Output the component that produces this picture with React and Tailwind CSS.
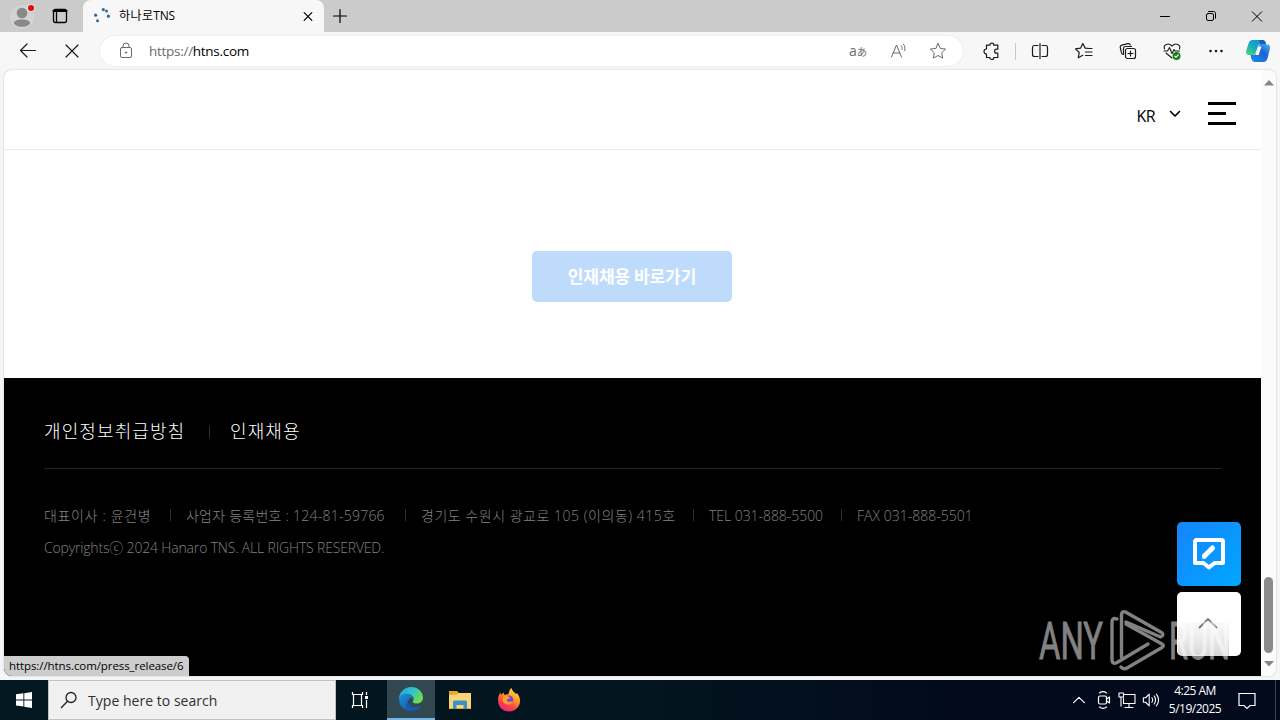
import React from "react";

const footerInfo = [
  { text: "대표이사 : 윤건병", className: "w-[108px] tracking-[0.66px]" },
  { text: "사업자 등록번호 : 124-81-59766", className: "w-[200px] tracking-[0.24px]" },
  { text: "경기도 수원시 광교로 105 (이의동) 415호", className: "w-[254px] tracking-[0.52px]" },
  { text: "TEL 031-888-5500", className: "w-[114px] tracking-[-0.05px]" },
  { text: "FAX 031-888-5501", className: "w-[117px] tracking-[0.02px]" },
];

// Line icon, drawn on a 20px grid
function Icon({ children, size = 20, width = 1, className = "" }) {
  return (
    <svg
      width={size}
      height={size}
      viewBox="0 0 20 20"
      fill="none"
      stroke="currentColor"
      strokeWidth={width}
      strokeLinecap="round"
      strokeLinejoin="round"
      className={`shrink-0 ${className}`}
    >
      {children}
    </svg>
  );
}

function Cell({ children, className = "w-11" }) {
  return (
    <div className={`flex h-full shrink-0 items-center justify-center ${className}`}>
      {children}
    </div>
  );
}

function TabStrip() {
  return (
    <div className="flex h-8 shrink-0 bg-[#cbcbcb] text-black">
      <Cell className="w-11">
        <svg width="28" height="28" viewBox="0 0 28 28">
          <circle cx="14" cy="15" r="12" fill="#d3d3d3" />
          <circle cx="14" cy="11" r="5.3" fill="#898989" />
          <path d="M6 21.500c0-3 3-4 8-4s8 1 8 4c-1.500 2.500-4.500 3.300-8 3.300s-6.500-.8-8-3.300z" fill="#898989" />
          <circle cx="23" cy="6" r="4" fill="#e0e0e0" />
          <circle cx="23" cy="6" r="3" fill="#e00b0b" />
        </svg>
      </Cell>
      <Cell className="w-[32px]">
        <Icon width={1.3}>
          <rect x="3.500" y="3.500" width="13" height="13" rx="2" />
          <path d="M3.500 5h13" strokeWidth="2.200" />
          <path d="M6.500 6v10" />
        </Icon>
      </Cell>
      <div className="ml-[7px] flex w-[241px] items-center rounded-t-lg bg-[#f7f7f7] pl-2.5">
        <svg width="18" height="18" viewBox="0 0 18 18" fill="#2f6a9e">
          <circle cx="2.600" cy="8.200" r="1.600" />
          <circle cx="4.500" cy="13.800" r="1.500" />
          <circle cx="10.300" cy="2.600" r="1.600" />
          <circle cx="13.500" cy="4" r="1.500" />
          <circle cx="15.400" cy="9.200" r="1.600" />
        </svg>
        <span className="ml-[8px] flex-1 whitespace-nowrap font-['Open_Sans','Noto_Sans_CJK_KR',sans-serif] text-[12px] tracking-[0.4px]">
          하나로<span className="tracking-[-0.2px]">TNS</span>
        </span>
        <Icon width={1.2} className="mr-[6px]">
          <path d="M6.200 6.700l7.600 7.600M13.800 6.700l-7.600 7.600" />
        </Icon>
      </div>
      <Cell className="w-8">
        <Icon width={1.2}>
          <path d="M10 3.500v13M3.500 10h13" />
        </Icon>
      </Cell>
      <div className="flex-1" />
      <Cell className="w-[46px]">
        <Icon>
          <path d="M5.500 10.500h9" />
        </Icon>
      </Cell>
      <Cell className="w-[46px]">
        <Icon>
          <rect x="5.500" y="7.500" width="7" height="7" rx="1.500" />
          <path d="M7.500 5.500h5.200c1.200 0 1.800.6 1.800 1.800v5" />
        </Icon>
      </Cell>
      <Cell className="w-[46px]">
        <Icon>
          <path d="M5.300 5.800l9.400 9.400M14.700 5.800l-9.400 9.400" />
        </Icon>
      </Cell>
    </div>
  );
}

function Toolbar() {
  return (
    <div className="flex h-[38px] shrink-0 items-center bg-[#f7f7f7] pl-1.5 text-[#1b1b1b]">
      <Cell>
        <Icon width={1.2}>
          <path d="M17.500 9.500H2.500M9 3L2.500 9.500 9 16" />
        </Icon>
      </Cell>
      <Cell>
        <Icon width={1.2}>
          <path d="M4 4l12 12M16 4L4 16" />
        </Icon>
      </Cell>
      <div className="ml-1.5 flex h-[30px] w-[863px] items-center rounded-full bg-white pr-[5px] pl-4 text-[#6b6b6b] shadow-[0_0_2px_#dcdcdc]">
        <Icon>
          <rect x="4.500" y="6.500" width="11" height="10" rx="1.500" />
          <path d="M7 6.500V5a3 3 0 0 1 6 0v1.500" />
          <circle cx="10" cy="11.500" r=".7" fill="currentColor" />
        </Icon>
        <span className="ml-[13px] flex-1 font-['Open_Sans',sans-serif] text-[13.500px] tracking-[-0.28px]">
          https://<span className="text-black">htns.com</span>
        </span>
        <Cell className="w-10">
          <span className="flex items-baseline whitespace-nowrap font-['Open_Sans','Noto_Sans_CJK_JP',sans-serif] text-[14px] leading-none">
            a<span className="text-[10px]">あ</span>
          </span>
        </Cell>
        <Cell className="w-10">
          <Icon className="ml-px">
            <path d="M2.500 16L7.500 4l5 12M4.300 12h6.400M12 4.500c1.200 1 1.500 2.500 1 4M14.200 3c1.800 1.700 2.200 4 1.500 6.500" />
          </Icon>
        </Cell>
        <Cell className="w-10">
          <Icon>
            <path d="M10 2.500l2.300 4.900 5.300.7-3.900 3.700 1 5.300-4.700-2.600-4.700 2.600 1-5.300-3.900-3.700 5.300-.7z" />
          </Icon>
        </Cell>
      </div>
      <Cell className="ml-1.5 w-11">
        <Icon width={1.2} className="ml-[2px]">
          <path d="M4.500 4.200h3.300a2 2 0 0 1 4 0h4v4h-1.200a2 2 0 0 0 0 4h1.200v4.300h-4a2 2 0 0 1-4 0H4.500V13a2.400 2.400 0 0 1 0-5z" />
        </Icon>
      </Cell>
      <div className="ml-[2px] mr-[2px] h-[17px] w-px bg-[#c9c9c9]" />
      <Cell>
        <Icon width={1.2} className="-ml-px">
          <path d="M8 4.500H4.500a2 2 0 0 0-2 2v7a2 2 0 0 0 2 2H8M12 4.500h3.500a2 2 0 0 1 2 2v7a2 2 0 0 1-2 2H12M10 2.500v15" />
        </Icon>
      </Cell>
      <Cell>
        <Icon width={1.2}>
          <path d="M15.500 7.500l-4.300-.4L8.800 2.500 6.500 7.200l-5 .7L5.200 11.500l-.9 5.200 4.500-2.400M12 7.500h6M11.500 11H18M11.500 14.500H18" />
        </Icon>
      </Cell>
      <Cell>
        <Icon width={1.2}>
          <path d="M5.500 13.500c-1.200 0-1.700-.6-2-1.600L2.300 6.500c-.3-1.200.3-2 1.500-2.300l6.200-1.500c1.300-.3 2 .2 2.300 1.300M5.500 13V7.500a2 2 0 0 1 2-2h6" />
          <rect x="7.500" y="7.500" width="10" height="10" rx="2" />
          <path d="M12.500 10v5M10 12.500h5" />
        </Icon>
      </Cell>
      <Cell>
        <Icon width={1.1}>
          <path d="M2.500 8C1 4 6 1 10 5c4-4 9-1 7.500 3M4 12l6 5M2 10h3.500l2-3.500 2.500 6 2-4 1 1.500h4.500" />
          <circle cx="14.500" cy="15" r="4" fill="#16801b" stroke="none" />
          <path d="M12.700 15.200l1.300 1.200 2.300-2.500" stroke="white" />
        </Icon>
      </Cell>
      <Cell>
        <Icon>
          <g fill="currentColor" stroke="none">
            <circle cx="4.500" cy="10" r="1.300" />
            <circle cx="10" cy="10" r="1.300" />
            <circle cx="15.500" cy="10" r="1.300" />
          </g>
        </Icon>
      </Cell>
      <Cell className="w-10">
        <svg width="26" height="26" viewBox="0 0 26 26">
          <defs>
            <linearGradient id="copA" x1="0" y1="1" x2="1" y2="0">
              <stop offset="0" stopColor="#55d86b" />
              <stop offset=".5" stopColor="#12a8c7" />
              <stop offset="1" stopColor="#1683db" />
            </linearGradient>
            <linearGradient id="copB" x1="0" y1="1" x2="1" y2="0">
              <stop offset="0" stopColor="#1590f0" />
              <stop offset=".6" stopColor="#1f63d2" />
              <stop offset="1" stopColor="#45b9f4" />
            </linearGradient>
          </defs>
          <path d="M8 2h9c3 0 3.500 2 4.200 4.500h-5.500c-2 0-2.600 1-3.200 3l-1.300 4c-.8 2.500-2 3.500-4 3.500H4C1 17 .6 14.500 1.400 12L3.500 5.500C4.200 3 5.600 2 8 2z" fill="url(#copA)" />
          <path d="M14 2h3c3 0 3.500 2 4.200 4.500h-5.500z" fill="#1760b8" />
          <path d="M18.500 24h-8c-3 0-3.800-1.800-4.500-4.500L5.500 17H8c2 0 3.200-1 4-3.500l1.500-4.500c.5-1.700 1.500-2.500 3-2.500h5.700c3 0 3.400 2.500 2.600 5l-2.100 8.300c-.7 2.700-2 4.200-4.200 4.200z" fill="url(#copB)" />
          <path d="M13.500 8.500h3L13.500 17H10.600z" fill="white" />
        </svg>
      </Cell>
    </div>
  );
}

function Divider() {
  return <span className="h-3 w-px shrink-0 bg-[#2d2d2d]" />;
}

function SiteFooter() {
  return (
    <footer className="h-[298px] bg-black px-10 font-['Open_Sans','Noto_Sans_CJK_KR',sans-serif] font-light">
      <div className="flex h-[91px] items-center border-b border-[#262626] pt-[17px] text-white">
        <a className="w-[165px] whitespace-nowrap text-[18px] tracking-[1.1px]">개인정보취급방침</a>
        <Divider />
        <a className="ml-[20px] whitespace-nowrap text-[18px] tracking-[1.1px]">인재채용</a>
      </div>
      <div className="mt-[30px] flex h-8 items-center text-[14px] text-[#828282]">
        {footerInfo.map((item, i) => (
          <React.Fragment key={item.text}>
            {i > 0 && (
              <span className={`mr-[15px] flex ${i === 2 ? "ml-[19px]" : "ml-[18px]"}`}>
                <Divider />
              </span>
            )}
            <span className={`shrink-0 whitespace-nowrap ${item.className}`}>{item.text}</span>
          </React.Fragment>
        ))}
      </div>
      <p className="flex h-8 items-center text-[14px] tracking-[-0.17px] text-[#828282]">
        Copyrightsⓒ 2024 Hanaro TNS. ALL RIGHTS RESERVED.
      </p>
    </footer>
  );
}

function Watermark() {
  return (
    <svg width="200" height="66" viewBox="0 0 200 66" className="overflow-visible">
      <defs>
        <linearGradient id="runShade" x1="0" y1="0" x2="0" y2="1">
          <stop offset="0" stopColor="#000" stopOpacity=".02" />
          <stop offset=".5" stopColor="#000" stopOpacity=".08" />
          <stop offset="1" stopColor="#000" stopOpacity=".16" />
        </linearGradient>
      </defs>
      <path d="M141 14h51v34h-51z" fill="url(#runShade)" />
      <g fill="#828282" stroke="#828282" strokeWidth=".9" fontFamily="Roboto, sans-serif" fontSize="52">
        <text x="2" y="51" textLength="64" lengthAdjust="spacingAndGlyphs">ANY</text>
      </g>
      <g fill="white" stroke="white" strokeWidth=".9" opacity=".5" fontFamily="Roboto, sans-serif" fontSize="52">
        <text x="132" y="51" textLength="61" lengthAdjust="spacingAndGlyphs">RUN</text>
      </g>
      <g fill="none" stroke="#828282" strokeWidth="3.400" strokeLinejoin="round" strokeLinecap="round">
        <path d="M84.500 49V7c0-3 2-4 4-3l36 20.500c2 1.300 2 3.500-1 4.500L89 14" />
        <path d="M80 11c-4-1.500-5 .5-5 3v38c0 3 2 4 5 2.500L111 36" />
        <path d="M89 16l36 20c1.800 1 1.800 2 0 3.500L90 60c-2.500 1.500-4 1-6-1" />
        <path d="M84.500 49L120 32.500" strokeWidth="0" />
      </g>
    </svg>
  );
}

function Page() {
  return (
    <div className="relative mx-1 flex h-[606px] shrink-0 overflow-hidden rounded-lg bg-white shadow-[0_0_2px_#b9b9b9]">
      <main className="flex w-[1257px] shrink-0 flex-col">
        <header className="flex h-20 shrink-0 items-center justify-end border-b border-[#ebebeb] pr-[25px] text-black">
          <span className="mt-[12px] font-['Open_Sans',sans-serif] text-[16px] tracking-[-0.6px]">KR</span>
          <Icon size={20} width={1.700} className="mt-[9px] ml-[10px]">
            <path d="M5.500 7.500L10 12l4.500-4.500" />
          </Icon>
          <div className="mt-[7px] ml-[23px] flex w-7 flex-col gap-[7px]">
            <span className="h-[3px] bg-black" />
            <span className="h-[3px] w-[18px] bg-black" />
            <span className="h-[3px] bg-black" />
          </div>
        </header>
        <section className="flex flex-1 items-start justify-center pt-[101px] pr-px">
          <button className="h-[51px] w-[200px] rounded-[5px] bg-[#bedbfb] pb-[2px] font-['Noto_Sans_CJK_KR',sans-serif] text-[17px] font-bold tracking-[-0.05px] whitespace-nowrap text-white">
            인재채용 바로가기
          </button>
        </section>
        <SiteFooter />
      </main>

      <div className="flex w-[15px] flex-col items-center bg-[#fbfbfb]">
        <svg width="10" height="6" viewBox="0 0 10 6" className="mt-[10px]">
          <path d="M5 0l5 5.500H0z" fill="#858585" />
        </svg>
        <div className="mt-auto h-[76px] w-[9px] rounded-full bg-[#8b8b8b]" />
        <svg width="10" height="6" viewBox="0 0 10 6" className="mt-[8px] mb-[9px]">
          <path d="M5 5.500L10 0H0z" fill="#858585" />
        </svg>
      </div>

      {/* Floating buttons */}
      <div className="absolute top-[452px] right-[35px] flex flex-col gap-1.5">
        <div className="flex size-16 items-center justify-center rounded-[5px] bg-linear-to-br from-[#1683ff] to-[#00a7ff]">
          <svg width="34" height="34" viewBox="0 0 34 34" fill="none" stroke="white" strokeWidth="4">
            <path d="M3 4.500c0-.8.700-1.500 1.500-1.500h25c.8 0 1.500.7 1.500 1.500V26h-8.500L17 30.500 11.500 26H3z" strokeLinejoin="round" />
            <path d="M12.500 19L20.500 11" strokeWidth="5" strokeLinecap="round" />
            <path d="M10 21.500v-4.500l4.500 4.500z" fill="white" stroke="none" />
          </svg>
        </div>
        <div className="flex size-16 items-center justify-center rounded-[5px] bg-white pr-[2px] pb-[2px] text-[#777]">
          <svg width="22" height="14" viewBox="0 0 22 14" fill="none" stroke="currentColor" strokeWidth="1.800">
            <path d="M2 12l9-9 9 9" />
          </svg>
        </div>
      </div>

      <div className="absolute top-[538px] left-[1033px]">
        <Watermark />
      </div>

      {/* Link status */}
      <div className="absolute bottom-0 left-0 flex h-5 w-[185px] items-center rounded-tr-[4px] bg-[#cdcdcd] pl-[5px] font-['Open_Sans',sans-serif] text-[11.500px] tracking-[-0.08px] whitespace-nowrap text-black">
        https://htns.com/press_release/6
      </div>
    </div>
  );
}

function Taskbar() {
  return (
    <div className="flex h-10 shrink-0 bg-linear-to-r from-[#02171f] via-[#03151e] via-50% to-[#020a1c] to-75% font-['Open_Sans',sans-serif] text-white">
      <Cell className="w-12">
        <svg width="16" height="16" viewBox="0 0 16 16" fill="white">
          <path d="M0 2.300l7.400-1v6.200H0zM8.300 1.200L16 0v7.500H8.300zM0 8.400h7.400v6.200l-7.400-1zM8.300 8.400H16V16l-7.700-1.200z" />
        </svg>
      </Cell>
      <div className="flex w-72 items-center border border-[#c2c2c2] bg-[#f1f1f1] pl-[11px] text-[#303030]">
        <svg width="18" height="18" viewBox="0 0 18 18" fill="none" stroke="#222" strokeWidth="1.300">
          <circle cx="11" cy="6.500" r="5" />
          <path d="M7.500 10.300L1 17" />
        </svg>
        <span className="mt-px ml-[10px] text-[14px] tracking-[0.03px]">Type here to search</span>
      </div>
      <Cell className="w-12">
        <svg width="18" height="18" viewBox="0 0 18 18" fill="none" stroke="white" strokeWidth="1.200">
          <path d="M1.500 1v2.500h10V1M1.500 17v-2.500h10V17M15.500 1v3M15.500 9v8" />
          <path d="M2.500 3.500v11M10.500 3.500v11" />
          <path d="M14 6.500h3" strokeWidth="3" />
        </svg>
      </Cell>
      <div className="ml-[3px] flex w-12 items-center justify-center border-b-2 border-[#76b5e8] bg-[#324850]">
        <svg width="24" height="24" viewBox="0 0 24 24">
          <defs>
            <linearGradient id="edgeTop" x1="0" y1="0" x2="1" y2=".6">
              <stop offset="0" stopColor="#2498db" />
              <stop offset=".5" stopColor="#2fc3cf" />
              <stop offset="1" stopColor="#6edc4b" />
            </linearGradient>
            <linearGradient id="edgeLow" x1="0" y1="0" x2="1" y2="1">
              <stop offset="0" stopColor="#1993dd" />
              <stop offset="1" stopColor="#0e4c9c" />
            </linearGradient>
          </defs>
          <path d="M0 12C0 5 5.500 0 12 0c7 0 12 5 12 10.500 0 4-3 6-6.500 6-3 0-4.500-1-3.500-2.500 1.700-2.500-.5-6.500-5.500-6.500C4 7.500 0 10 0 12z" fill="url(#edgeTop)" />
          <path d="M0 12c.3-3.300 4-5.500 8-5.500 4.500 0 6.600 3 6.500 5.500-2-2-5.500-1-5.500 3 0 4.500 6 7 13 4-2 3-5.500 5-10 5C5 24 0 18.500 0 12z" fill="url(#edgeLow)" />
          <path d="M9 13c-2 5 3 9.500 13 6-2 3.500-6.500 5.300-10.500 5-4-1.500-6.500-7-2.500-11z" fill="#1459b3" />
        </svg>
      </div>
      <Cell className="w-[50px]">
        <svg width="22" height="20" viewBox="0 0 22 20">
          <path d="M0 1h8l2 2h12v16H0z" fill="#e9a927" />
          <path d="M0 5l8-.500L10 3h12v15H0z" fill="#f9d573" />
          <path d="M4 19v-7c0-1 .5-1.500 1.500-1.500h11c1 0 1.500.5 1.500 1.500v7h-3.500v-4h-7v4z" fill="#3b91ce" />
        </svg>
      </Cell>
      <Cell className="w-12">
        <svg width="24" height="24" viewBox="0 0 24 24">
          <defs>
            <linearGradient id="foxBody" x1=".8" y1="0" x2=".3" y2="1">
              <stop offset="0" stopColor="#ffe14c" />
              <stop offset=".4" stopColor="#ff9b25" />
              <stop offset=".75" stopColor="#fb3c4d" />
              <stop offset="1" stopColor="#e52680" />
            </linearGradient>
          </defs>
          <path d="M1 12c0-3 1-5.500 2.500-7.500L4 7l2.500-2.500L7.500 7l4-1c.5-3 1.500-5 3-6 .5 3 3 4 4.500 6l1-1c2 2.500 3 5 3 8 0 6-5 10.500-11 10.500S1 19 1 12z" fill="url(#foxBody)" />
          <circle cx="11.800" cy="12" r="4.500" fill="#7842d5" />
          <path d="M6.500 8c3-.5 5.500.2 7 2l-3 1.200c-1 .5-1 2 1 2.500 2 .5 3-.5 4.500-.5-1 3-5 4.500-8 2.500-2.500-1.700-3-4.500-1.500-7.700z" fill="#ff9b28" />
        </svg>
      </Cell>
      <div className="flex-1" />
      <Cell className="w-6">
        <Icon size={18} width={1.300}>
          <path d="M4 13L10 7l6 6" />
        </Icon>
      </Cell>
      <Cell className="w-6">
        <Icon size={20} width={1.200}>
          <rect x="5.500" y="6" width="8" height="8" rx="1.500" />
          <path d="M13.500 9l3-2v6l-3-2M6.500 3c2-1.500 5-1.500 7 0M6.500 17c2 1.500 5 1.500 7 0" />
        </Icon>
      </Cell>
      <Cell className="w-6">
        <Icon size={20} width={1.100}>
          <path d="M7 4.500h11v9H6.500V8M12 13.500V17M8 17.500h8" />
          <rect x="2" y="3" width="4.500" height="4" />
          <path d="M4 7v9" />
        </Icon>
      </Cell>
      <Cell className="w-6">
        <Icon size={18} width={1.200}>
          <path d="M1.500 7.500h2.500L8 3.500v13L4 12.500H1.500zM11 7.500c1 1.500 1 3.500 0 5M13.500 5.500c2 2.500 2 6.500 0 9M16 3.500c3 4 3 9 0 13" />
        </Icon>
      </Cell>
      <div className="flex w-16 flex-col items-center justify-center text-center text-[12px] leading-[18px] tracking-[-0.5px] whitespace-nowrap">
        <span>4:25 AM</span>
        <span>5/19/2025</span>
      </div>
      <Cell className="w-10">
        <Icon size={20} width={1.200}>
          <path d="M2 3.500h16v12h-5l-3 3-3-3H2z" strokeLinejoin="miter" />
        </Icon>
      </Cell>
      <div className="ml-[8px] mr-[4px] w-px bg-[#3a4355]" />
    </div>
  );
}

export default function App() {
  return (
    <div className="flex h-[720px] w-[1280px] flex-col overflow-hidden bg-[#f4f6f8]">
      <TabStrip />
      <Toolbar />
      <Page />
      <div className="h-1 shrink-0" />
      <Taskbar />
    </div>
  );
}
